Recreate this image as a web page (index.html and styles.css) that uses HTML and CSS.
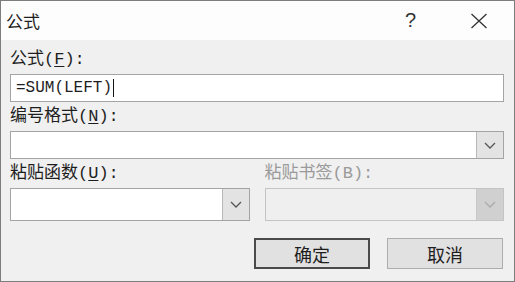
FILE: index.html
```html
<!DOCTYPE html>
<html lang="zh-CN">
<head>
	<meta charset="UTF-8">
	<title>公式</title>
	<link rel="stylesheet" href="styles.css">
</head>
<body>
	<div class="dialog">
		<div class="titlebar">
			<span class="title">公式</span>
			<span class="help">?</span>
			<span class="close">
				<svg width="18" height="16" viewBox="0 0 18 16"><path d="M1.5 1L16.5 15M16.5 1L1.5 15" stroke="#333" stroke-width="1.3" fill="none"/></svg>
			</span>
		</div>
		<div class="content">
			<div class="label first">公式(<u>F</u>):</div>
			<div class="input">=SUM(LEFT)<span class="caret"></span></div>

			<div class="label">编号格式(<u>N</u>):</div>
			<div class="combo">
				<div class="field"></div>
				<div class="drop"><svg width="12" height="7" viewBox="0 0 12 7"><path d="M1 1L6 6L11 1" stroke="#555" stroke-width="1.3" fill="none"/></svg></div>
			</div>

			<div class="pair">
				<div>
					<div class="label">粘贴函数(<u>U</u>):</div>
					<div class="combo tall">
						<div class="field"></div>
						<div class="drop"><svg width="12" height="7" viewBox="0 0 12 7"><path d="M1 1L6 6L11 1" stroke="#555" stroke-width="1.3" fill="none"/></svg></div>
					</div>
				</div>
				<div>
					<div class="label off">粘贴书签(B):</div>
					<div class="combo tall disabled">
						<div class="field"></div>
						<div class="drop"><svg width="12" height="7" viewBox="0 0 12 7"><path d="M1 1L6 6L11 1" stroke="#aaa" stroke-width="1.3" fill="none"/></svg></div>
					</div>
				</div>
			</div>

			<div class="buttons">
				<button class="btn default">确定</button>
				<button class="btn">取消</button>
			</div>
		</div>
	</div>
</body>
</html>
```

FILE: styles.css
```css
html,body{margin:0;padding:0;background:#fff;}
.dialog{
	width:515px;height:282px;box-sizing:border-box;
	border:1px solid #7d7d7d;
	display:flex;flex-direction:column;
	font-family:"Liberation Mono","Noto Sans CJK SC",monospace;
	color:#1e1e1e;
}
.titlebar{height:39px;background:#fdfdfd;display:flex;align-items:center;padding-left:5px;}
.title{font-family:"Noto Sans CJK SC",sans-serif;font-size:17px;flex:1;}
.help{font-family:"Liberation Sans",sans-serif;font-size:20px;width:65px;color:#333;}
.close{width:44px;display:flex;}
.content{flex:1;background:#f0f0f0;padding:0 10px 0 9px;display:flex;flex-direction:column;}
.label{height:29px;line-height:29px;font-size:17px;}
.label.first{margin-top:5px;}
.label.off{color:#9a9a9a;}
.label u{text-underline-offset:2px;}
.input{
	height:28px;box-sizing:border-box;border:1px solid #a4a4a4;background:#fff;
	font-size:16px;line-height:26px;padding-left:5px;display:flex;align-items:center;
}
.caret{display:inline-block;width:1px;height:18px;background:#111;margin-left:1px;}
.combo{height:28px;box-sizing:border-box;border:1px solid #a4a4a4;background:#fff;display:flex;}
.combo.tall{height:33px;}
.field{flex:1;}
.drop{width:26px;background:#e3e3e3;border-left:1px solid #b8b8b8;display:flex;align-items:center;justify-content:center;}
.combo.disabled{background:#efefef;border-color:#c4c4c4;}
.combo.disabled .drop{background:#d0d0d0;border-left-color:#c8c8c8;}
.pair{display:grid;grid-template-columns:1fr 1fr;column-gap:15px;}
.buttons{display:flex;justify-content:flex-end;gap:17px;margin-top:17px;padding-right:1px;}
.btn{
	width:116px;height:31px;box-sizing:border-box;
	background:#e1e1e1;border:1px solid #adadad;
	font-family:"Noto Sans CJK SC",sans-serif;font-size:18px;color:#1e1e1e;padding:0;
}
.btn.default{border:2px solid #4a4a4a;}
```
